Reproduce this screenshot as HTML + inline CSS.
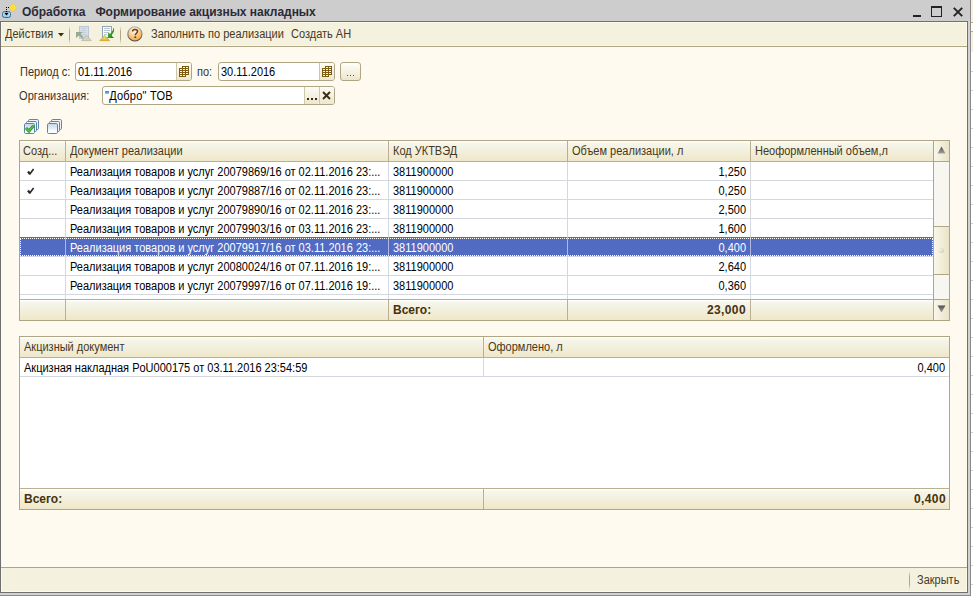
<!DOCTYPE html>
<html><head><meta charset="utf-8">
<style>
*{margin:0;padding:0;box-sizing:border-box}
html,body{width:973px;height:596px;overflow:hidden;background:#fff;font-family:"Liberation Sans",sans-serif;font-size:11px;color:#000}
.a{position:absolute}
.t{position:absolute;white-space:nowrap;line-height:13px;font-size:12px;transform:scaleX(0.9167);transform-origin:0 0}
.r{transform-origin:100% 0}
.fld{background:#fff;border:1px solid #aea685;border-radius:3px}
.cbtn{background:linear-gradient(#fdfcf6,#ece7d0);border-left:1px solid #cfc8a8;border-radius:0 2px 2px 0}
.btn{background:linear-gradient(#fffffa,#ebe6cc);border:1px solid #aea685;border-radius:3px}
.hdr{background:linear-gradient(#fefefa 0,#fefefa 1px,#f6f6ec 2px,#efe7c8 100%)}
.sbtn{background:linear-gradient(90deg,#f9f7ea,#e9e3c6)}
.hd{color:#463820}
.ft{color:#45320f;font-weight:bold;transform:none}
.num{letter-spacing:0.4px}
</style></head><body>
<!-- beyond-window strip -->
<div class="a" style="left:971px;top:0;width:2px;height:22px;background:#f5f1dc"></div>
<div class="a" style="left:971px;top:22px;width:2px;height:1px;background:#b8b08a"></div>
<div class="a" style="left:971px;top:23px;width:2px;height:8px;background:#fffcf0"></div>
<div class="a" style="left:971px;top:31px;width:2px;height:1px;background:#b8b08a"></div>
<div class="a" style="left:971px;top:32px;width:2px;height:20px;background:#f5f1de"></div>
<div class="a" style="left:971px;top:71px;width:2px;height:1px;background:#c9d1d9"></div>
<div class="a" style="left:971px;top:90px;width:2px;height:1px;background:#c9d1d9"></div>
<div class="a" style="left:971px;top:109px;width:2px;height:1px;background:#c9d1d9"></div>
<div class="a" style="left:971px;top:128px;width:2px;height:1px;background:#c9d1d9"></div>
<div class="a" style="left:971px;top:147px;width:2px;height:1px;background:#c9d1d9"></div>
<div class="a" style="left:971px;top:166px;width:2px;height:1px;background:#c9d1d9"></div>
<div class="a" style="left:971px;top:185px;width:2px;height:1px;background:#c9d1d9"></div>
<div class="a" style="left:971px;top:204px;width:2px;height:1px;background:#c9d1d9"></div>
<div class="a" style="left:971px;top:223px;width:2px;height:1px;background:#c9d1d9"></div>
<div class="a" style="left:971px;top:242px;width:2px;height:1px;background:#c9d1d9"></div>
<div class="a" style="left:971px;top:261px;width:2px;height:1px;background:#c9d1d9"></div>
<div class="a" style="left:971px;top:280px;width:2px;height:1px;background:#c9d1d9"></div>
<div class="a" style="left:971px;top:299px;width:2px;height:1px;background:#c9d1d9"></div>
<div class="a" style="left:971px;top:318px;width:2px;height:1px;background:#c9d1d9"></div>
<div class="a" style="left:971px;top:337px;width:2px;height:1px;background:#c9d1d9"></div>
<div class="a" style="left:971px;top:356px;width:2px;height:1px;background:#c9d1d9"></div>
<div class="a" style="left:971px;top:375px;width:2px;height:1px;background:#c9d1d9"></div>
<div class="a" style="left:971px;top:394px;width:2px;height:1px;background:#c9d1d9"></div>
<div class="a" style="left:971px;top:413px;width:2px;height:1px;background:#c9d1d9"></div>
<div class="a" style="left:971px;top:432px;width:2px;height:1px;background:#c9d1d9"></div>
<div class="a" style="left:971px;top:451px;width:2px;height:1px;background:#c9d1d9"></div>
<div class="a" style="left:971px;top:470px;width:2px;height:1px;background:#c9d1d9"></div>
<div class="a" style="left:971px;top:489px;width:2px;height:1px;background:#c9d1d9"></div>
<div class="a" style="left:971px;top:508px;width:2px;height:1px;background:#c9d1d9"></div>
<div class="a" style="left:971px;top:527px;width:2px;height:1px;background:#c9d1d9"></div>
<div class="a" style="left:971px;top:546px;width:2px;height:1px;background:#c9d1d9"></div>
<div class="a" style="left:971px;top:565px;width:2px;height:1px;background:#c9d1d9"></div>
<div class="a" style="left:971px;top:584px;width:2px;height:1px;background:#c9d1d9"></div>
<!-- title bar -->
<div class="a" style="left:0;top:0;width:970px;height:21px;background:#cdcdcd"></div>
<div class="a" style="left:970px;top:0;width:1px;height:596px;background:#8a8a8a"></div>
<div class="a" style="left:968px;top:21px;width:2px;height:574px;background:#d2d2d2"></div>
<div class="a" style="left:0;top:593px;width:970px;height:2px;background:#d2d2d2"></div>
<div class="a" style="left:0;top:595px;width:971px;height:1px;background:#8a8a8a"></div>
<div class="a" style="left:0;top:21px;width:968px;height:572px;background:#707070"></div>
<!-- panel -->
<div class="a" style="left:1px;top:22px;width:966px;height:570px;background:#fcfae6"></div>
<div class="a" style="left:2px;top:23px;width:964px;height:568px;background:#fffaef"></div>

<!-- title text -->
<div class="t" style="left:22px;top:5px;font-size:12px;font-weight:bold;color:#2a2a38;line-height:14px;transform:none;letter-spacing:-0.03px">Обработка&nbsp;&nbsp;&nbsp;Формирование акцизных накладных</div>
<!-- window buttons -->
<div class="a" style="left:913px;top:15px;width:8px;height:2px;background:#222"></div>
<div class="a" style="left:931px;top:6px;width:11px;height:11px;border:1px solid #222;border-top-width:2px"></div>
<svg class="a" style="left:952px;top:6px" width="12" height="12" viewBox="0 0 12 12"><path d="M1.8 1.8L10.2 10.2M10.2 1.8L1.8 10.2" stroke="#222" stroke-width="1.9"/></svg>
<!-- title icon -->
<svg class="a" style="left:0;top:0" width="20" height="20" viewBox="0 0 20 20">
<defs><linearGradient id="bb" x1="0" y1="0" x2="0" y2="1"><stop offset="0" stop-color="#d0f0ff"/><stop offset="1" stop-color="#88c4e8"/></linearGradient></defs>
<rect x="2.5" y="11.5" width="8" height="6" rx="2" fill="url(#bb)" stroke="#3f6d8f" stroke-width="1"/>
<path d="M13 3.2L17 7.6L13 12L9 7.6Z" fill="#ffe034" stroke="#e0c080" stroke-width="0.7"/>
<path d="M6 7h1v1h-1zM8 7h1v1h-1zM6 9h1v1h-1zM6 11h1v1h-1z" fill="#000"/>
<path d="M4.2 12.8H8.8L6.5 15.5Z" fill="#000"/>
</svg>

<!-- toolbar -->
<div class="a" style="left:2px;top:23px;width:964px;height:22px;background:#f4f1de"></div>
<div class="a" style="left:1px;top:45px;width:966px;height:1px;background:#faf7e8"></div>
<div class="a" style="left:1px;top:46px;width:966px;height:1px;background:#aea685"></div>
<div class="t" style="left:5px;top:28px;color:#47391d">Действия</div>
<svg class="a" style="left:58px;top:33px" width="6" height="4"><path d="M0 0H6L3 3.5Z" fill="#3c2c10"/></svg>
<div class="a" style="left:69px;top:26px;width:1px;height:18px;background:linear-gradient(#f4f1de,#b0a880 30%,#b0a880 70%,#f4f1de)"></div>
<div class="a" style="left:120px;top:26px;width:1px;height:18px;background:linear-gradient(#f4f1de,#b0a880 30%,#b0a880 70%,#f4f1de)"></div>
<!-- disabled icon -->
<svg class="a" style="left:72px;top:24px" width="48" height="20" viewBox="72 24 48 20">
<rect x="79.5" y="26.5" width="9" height="12" fill="#d9dee3" stroke="#b9c7d6"/>
<path d="M81 28.5H86M81 30.5H86M81 32.5H86M81 34.5H86" stroke="#c3cfdb"/>
<path d="M76 32H82.5L80.5 34L83.5 37L82 38.5L79 35.5L76 38Z" fill="#94aa94"/>
<path d="M86.4 35L91.2 40.6H81.6Z" fill="#d6d2bc" stroke="#bdb59c" stroke-width="0.8"/>
<rect x="102.5" y="26.5" width="9" height="11" fill="#f7f9fc" stroke="#8fa6b8"/>
<path d="M104 28.5H110M104 30.5H110M104 32.5H108M104 34.5H107" stroke="#b8c6d3"/>
<defs><linearGradient id="gg" x1="0" y1="0" x2="1" y2="1"><stop offset="0" stop-color="#58c040"/><stop offset="1" stop-color="#1a7a1a"/></linearGradient>
<linearGradient id="yg" x1="0" y1="0" x2="0" y2="1"><stop offset="0" stop-color="#f8e878"/><stop offset="1" stop-color="#e0b828"/></linearGradient></defs>
<path d="M108 32L110 34L113 30V28.5L114 28V31.5L111.5 35.5L114 38H108Z" fill="url(#gg)"/>
<path d="M104.6 35.4L109.4 40.6H99.8Z" fill="url(#yg)" stroke="#d0a020" stroke-width="0.8"/>
</svg>
<!-- help -->
<svg class="a" style="left:122px;top:22px" width="26" height="24" viewBox="122 22 26 24">
<defs><radialGradient id="hg" cx="0.45" cy="0.3" r="0.75"><stop offset="0" stop-color="#fffaf0"/><stop offset="0.55" stop-color="#f9c880"/><stop offset="1" stop-color="#f0a030"/></radialGradient>
<linearGradient id="hb" x1="0" y1="0" x2="0" y2="1"><stop offset="0" stop-color="#b8b8b8"/><stop offset="1" stop-color="#504848"/></linearGradient></defs>
<circle cx="134.9" cy="33.9" r="7.1" fill="url(#hg)" stroke="url(#hb)" stroke-width="1.1"/>
<path d="M132.6 31.5C132.6 30 133.7 29.6 135 29.6C136.5 29.6 137.5 30.4 137.5 31.6C137.5 33.2 135.3 33.4 135.3 35.3" stroke="#6a3a18" stroke-width="1.5" fill="none"/>
<rect x="134.4" y="36.4" width="1.8" height="1.6" fill="#6a3a18"/>
</svg>
<div class="t" style="left:151px;top:28px;color:#47391d">Заполнить по реализации</div>
<div class="t" style="left:291px;top:28px;color:#47391d">Создать АН</div>

<!-- form row 1 -->
<div class="t" style="left:20px;top:66px;color:#38322e">Период с:</div>
<div class="a fld" style="left:75px;top:62px;width:117px;height:19px"></div>
<div class="t" style="left:78px;top:66px;color:#000">01.11.2016</div>
<div class="a cbtn" style="left:176px;top:63px;width:15px;height:17px"></div>
<svg class="a" style="left:179px;top:66px;shape-rendering:crispEdges" width="11" height="11" viewBox="0 0 11 11"><use href="#cal"/></svg>
<div class="t" style="left:197px;top:66px;color:#38322e">по:</div>
<div class="a fld" style="left:218px;top:62px;width:117px;height:19px"></div>
<div class="t" style="left:221px;top:66px;color:#000">30.11.2016</div>
<div class="a cbtn" style="left:319px;top:63px;width:15px;height:17px"></div>
<svg class="a" style="left:322px;top:66px;shape-rendering:crispEdges" width="11" height="11" viewBox="0 0 11 11"><use href="#cal"/></svg>
<div class="a btn" style="left:340px;top:62px;width:21px;height:19px"></div>
<svg class="a" style="left:346px;top:74px;shape-rendering:crispEdges" width="9" height="3"><path d="M1 1h1v1h-1zM4 1h1v1h-1zM7 1h1v1h-1z" fill="#803858"/></svg>
<!-- form row 2 -->
<div class="t" style="left:19px;top:90px;color:#38322e;letter-spacing:0.1px">Организация:</div>
<div class="a fld" style="left:102px;top:86px;width:233px;height:19px"></div>
<div class="t" style="left:105px;top:90px;color:#000;letter-spacing:0.25px">"Добро" ТОВ</div>
<div class="a cbtn" style="left:304px;top:87px;width:15px;height:17px"></div>
<div class="a cbtn" style="left:319px;top:87px;width:15px;height:17px"></div>
<svg class="a" style="left:306px;top:98px" width="12" height="3"><rect x="1" y="0" width="2" height="2" fill="#3c2c10"/><rect x="5" y="0" width="2" height="2" fill="#3c2c10"/><rect x="9" y="0" width="2" height="2" fill="#3c2c10"/></svg>
<svg class="a" style="left:322px;top:91px" width="9" height="9" viewBox="0 0 9 9"><path d="M1 1L8 8M8 1L1 8" stroke="#3c2c10" stroke-width="1.9"/></svg>
<svg width="0" height="0" style="position:absolute"><defs><g id="cal"><path d="M3 0H10V9H7V11H0V2H3Z" fill="#7b5c12"/><path d="M4 1h2v1h-2zM7 1h2v1h-2zM1 3h2v1h-2zM4 3h2v1h-2zM7 3h2v1h-2zM1 5h2v1h-2zM4 5h2v1h-2zM7 5h2v1h-2zM1 7h2v1h-2zM4 7h2v1h-2zM7 7h2v1h-2zM1 9h2v1h-2zM4 9h2v1h-2z" fill="#fbf8ea"/></g></defs></svg>

<!-- group icons -->
<svg class="a" style="left:24px;top:119px" width="16" height="15" viewBox="0 0 16 15"><use href="#stk"/><path d="M2 9L5 12L9.6 6.6" stroke="#2a8a20" stroke-width="3" fill="none"/><path d="M2 9L5 12L9.6 6.6" stroke="#5cc040" stroke-width="1.6" fill="none"/></svg>
<svg class="a" style="left:47px;top:119px" width="16" height="15" viewBox="0 0 16 15"><use href="#stk"/></svg>
<svg width="0" height="0" style="position:absolute"><defs><linearGradient id="sq" x1="0" y1="0" x2="0" y2="1"><stop offset="0" stop-color="#c4d4e6"/><stop offset="0.7" stop-color="#f4f8fc"/><stop offset="1" stop-color="#ffffff"/></linearGradient><g id="stk">
<rect x="4.5" y="0.5" width="10" height="10" rx="1.2" fill="#f0f4f8" stroke="#5a86a8"/>
<rect x="2.5" y="2.5" width="10" height="10" rx="1.2" fill="#f0f4f8" stroke="#5a86a8"/>
<rect x="0.5" y="4.5" width="10" height="10" rx="1.2" fill="url(#sq)" stroke="#5a86a8"/>
</g></defs></svg>

<!-- main table -->
<div class="a" style="left:19px;top:140px;width:931px;height:181px;border:1px solid #aea685;background:#fff"></div>
<div class="a hdr" style="left:20px;top:141px;width:913px;height:20px"></div>
<div class="a" style="left:20px;top:161px;width:913px;height:1px;background:#b8b090"></div>
<div class="a hdr" style="left:20px;top:300px;width:913px;height:20px"></div>
<div class="a" style="left:20px;top:299px;width:913px;height:1px;background:#b8b090"></div>
<div class="a" style="left:20px;top:180px;width:913px;height:1px;background:#d3d9df"></div>
<div class="a" style="left:20px;top:199px;width:913px;height:1px;background:#d3d9df"></div>
<div class="a" style="left:20px;top:218px;width:913px;height:1px;background:#d3d9df"></div>
<div class="a" style="left:20px;top:237px;width:913px;height:1px;background:#d3d9df"></div>
<div class="a" style="left:20px;top:256px;width:913px;height:1px;background:#d3d9df"></div>
<div class="a" style="left:20px;top:275px;width:913px;height:1px;background:#d3d9df"></div>
<div class="a" style="left:20px;top:294px;width:913px;height:1px;background:#d3d9df"></div>
<div class="a" style="left:65px;top:141px;width:1px;height:20px;background:#b8b090"></div>
<div class="a" style="left:65px;top:162px;width:1px;height:137px;background:#d3d9df"></div>
<div class="a" style="left:65px;top:300px;width:1px;height:20px;background:#b8b090"></div>
<div class="a" style="left:388px;top:141px;width:1px;height:20px;background:#b8b090"></div>
<div class="a" style="left:388px;top:162px;width:1px;height:137px;background:#d3d9df"></div>
<div class="a" style="left:388px;top:300px;width:1px;height:20px;background:#b8b090"></div>
<div class="a" style="left:567px;top:141px;width:1px;height:20px;background:#b8b090"></div>
<div class="a" style="left:567px;top:162px;width:1px;height:137px;background:#d3d9df"></div>
<div class="a" style="left:567px;top:300px;width:1px;height:20px;background:#b8b090"></div>
<div class="a" style="left:750px;top:141px;width:1px;height:20px;background:#b8b090"></div>
<div class="a" style="left:750px;top:162px;width:1px;height:137px;background:#d3d9df"></div>
<div class="a" style="left:750px;top:300px;width:1px;height:20px;background:#b8b090"></div>
<!-- selected row -->
<div class="a" style="left:20px;top:237px;width:913px;height:19px;background:#526bc2"></div>
<div class="a" style="left:65px;top:237px;width:1px;height:19px;background:#aeb8e0"></div>
<div class="a" style="left:388px;top:237px;width:1px;height:19px;background:#aeb8e0"></div>
<div class="a" style="left:567px;top:237px;width:1px;height:19px;background:#aeb8e0"></div>
<div class="a" style="left:750px;top:237px;width:1px;height:19px;background:#aeb8e0"></div>
<div class="a" style="left:20px;top:238px;width:913px;height:18px;border:1px dotted #fff;border-bottom:none;border-right:none"></div>
<div class="a" style="left:20px;top:255px;width:913px;height:1px;border-top:1px dotted #fff"></div>
<div class="a" style="left:932px;top:238px;width:1px;height:18px;border-left:1px dotted #fff"></div>
<!-- header texts -->
<div class="t hd" style="left:23px;top:145px">Созд...</div>
<div class="t hd" style="left:70px;top:145px">Документ реализации</div>
<div class="t hd" style="left:393px;top:145px">Код УКТВЭД</div>
<div class="t hd" style="left:572px;top:145px">Объем реализации, л</div>
<div class="t hd" style="left:755px;top:145px">Неоформленный объем,л</div>
<svg class="a" style="left:26px;top:167px" width="10" height="10" viewBox="0 0 10 10"><path d="M2 4.5L4 7.1" stroke="#2a2a2a" stroke-width="2.3" fill="none"/><path d="M3.5 7.4L7.6 2.1" stroke="#2a2a2a" stroke-width="1.7" fill="none"/></svg>
<div class="t" style="left:70px;top:166px;color:#000">Реализация товаров и услуг 20079869/16 от 02.11.2016 23:...</div>
<div class="t" style="left:393px;top:166px;color:#000">3811900000</div>
<div class="t r" style="left:646px;top:166px;width:100px;text-align:right;color:#000">1,250</div>
<svg class="a" style="left:26px;top:186px" width="10" height="10" viewBox="0 0 10 10"><path d="M2 4.5L4 7.1" stroke="#2a2a2a" stroke-width="2.3" fill="none"/><path d="M3.5 7.4L7.6 2.1" stroke="#2a2a2a" stroke-width="1.7" fill="none"/></svg>
<div class="t" style="left:70px;top:185px;color:#000">Реализация товаров и услуг 20079887/16 от 02.11.2016 23:...</div>
<div class="t" style="left:393px;top:185px;color:#000">3811900000</div>
<div class="t r" style="left:646px;top:185px;width:100px;text-align:right;color:#000">0,250</div>
<div class="t" style="left:70px;top:204px;color:#000">Реализация товаров и услуг 20079890/16 от 02.11.2016 23:...</div>
<div class="t" style="left:393px;top:204px;color:#000">3811900000</div>
<div class="t r" style="left:646px;top:204px;width:100px;text-align:right;color:#000">2,500</div>
<div class="t" style="left:70px;top:223px;color:#000">Реализация товаров и услуг 20079903/16 от 03.11.2016 23:...</div>
<div class="t" style="left:393px;top:223px;color:#000">3811900000</div>
<div class="t r" style="left:646px;top:223px;width:100px;text-align:right;color:#000">1,600</div>
<div class="t" style="left:70px;top:242px;color:#fff">Реализация товаров и услуг 20079917/16 от 03.11.2016 23:...</div>
<div class="t" style="left:393px;top:242px;color:#fff">3811900000</div>
<div class="t r" style="left:646px;top:242px;width:100px;text-align:right;color:#fff">0,400</div>
<div class="t" style="left:70px;top:261px;color:#000">Реализация товаров и услуг 20080024/16 от 07.11.2016 19:...</div>
<div class="t" style="left:393px;top:261px;color:#000">3811900000</div>
<div class="t r" style="left:646px;top:261px;width:100px;text-align:right;color:#000">2,640</div>
<div class="t" style="left:70px;top:280px;color:#000">Реализация товаров и услуг 20079997/16 от 07.11.2016 19:...</div>
<div class="t" style="left:393px;top:280px;color:#000">3811900000</div>
<div class="t r" style="left:646px;top:280px;width:100px;text-align:right;color:#000">0,360</div>
<div class="t ft" style="left:393px;top:304px">Всего:</div>
<div class="t r ft num" style="left:650px;top:304px;width:96px;text-align:right">23,000</div>
<!-- scrollbar -->
<div class="a" style="left:933px;top:141px;width:1px;height:179px;background:#aea685"></div>
<div class="a" style="left:934px;top:162px;width:15px;height:137px;background:#f7f6f0"></div>
<div class="a sbtn" style="left:934px;top:141px;width:15px;height:20px"></div>
<div class="a" style="left:934px;top:161px;width:15px;height:1px;background:#aea685"></div>
<div class="a sbtn" style="left:934px;top:300px;width:15px;height:20px"></div>
<div class="a" style="left:934px;top:299px;width:15px;height:1px;background:#aea685"></div>
<div class="a sbtn" style="left:934px;top:226px;width:15px;height:49px;border-top:1px solid #aea685;border-bottom:1px solid #aea685"></div>
<div class="a" style="left:939px;top:248px;width:5px;height:5px;border-radius:50%;background:radial-gradient(circle at 35% 35%,#f4f2e6,#c8c2a8)"></div>
<svg class="a" style="left:937px;top:146px" width="9" height="8"><defs><linearGradient id="ag" x1="0" y1="0" x2="0" y2="1"><stop offset="0" stop-color="#505050"/><stop offset="1" stop-color="#a0a0a0"/></linearGradient></defs><path d="M4.5 0.5L8.5 7.5H0.5Z" fill="url(#ag)"/></svg>
<svg class="a" style="left:937px;top:305px" width="9" height="8"><path d="M0.5 0.5H8.5L4.5 7.5Z" fill="url(#ag)"/></svg>

<!-- bottom table -->
<div class="a" style="left:19px;top:336px;width:931px;height:174px;border:1px solid #aea685;background:#fff"></div>
<div class="a hdr" style="left:20px;top:337px;width:929px;height:20px"></div>
<div class="a" style="left:20px;top:357px;width:929px;height:1px;background:#b8b090"></div>
<div class="a" style="left:20px;top:376px;width:929px;height:1px;background:#d3d9df"></div>
<div class="a hdr" style="left:20px;top:489px;width:929px;height:20px"></div>
<div class="a" style="left:20px;top:488px;width:929px;height:1px;background:#b8b090"></div>
<div class="a" style="left:483px;top:337px;width:1px;height:20px;background:#b8b090"></div>
<div class="a" style="left:483px;top:358px;width:1px;height:18px;background:#d3d9df"></div>
<div class="a" style="left:483px;top:489px;width:1px;height:20px;background:#b8b090"></div>
<div class="t hd" style="left:24px;top:341px">Акцизный документ</div>
<div class="t hd" style="left:488px;top:341px">Оформлено, л</div>
<div class="t" style="left:24px;top:362px">Акцизная накладная PoU000175 от 03.11.2016 23:54:59</div>
<div class="t r" style="left:845px;top:362px;width:100px;text-align:right">0,400</div>
<div class="t ft" style="left:24px;top:493px">Всего:</div>
<div class="t r ft num" style="left:845px;top:493px;width:101px;text-align:right">0,400</div>

<!-- bottom bar -->
<div class="a" style="left:1px;top:567px;width:966px;height:1px;background:#aea685"></div>
<div class="a" style="left:2px;top:568px;width:964px;height:23px;background:#f4f1de"></div>
<div class="a" style="left:909px;top:571px;width:1px;height:19px;background:linear-gradient(#f4f1de,#b0a880 30%,#b0a880 70%,#f4f1de)"></div>
<div class="t" style="left:917px;top:574px;color:#47391d">Закрыть</div>
</body></html>
